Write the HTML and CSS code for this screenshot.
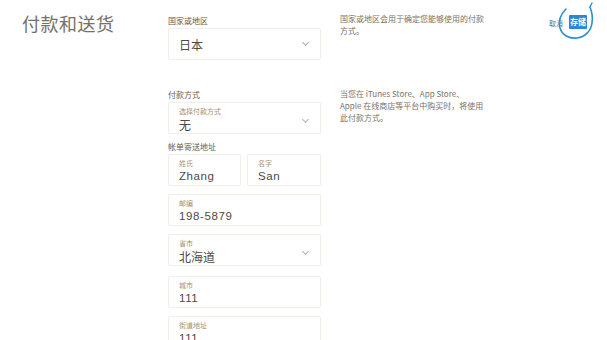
FILE: index.html
```html
<!DOCTYPE html>
<html lang="zh">
<head>
<meta charset="utf-8">
<link rel="stylesheet" href="styles.css">
</head>
<body>
<div class="page">
  <h1 class="title">付款和送货</h1>
  <div class="form">
    <div class="label">国家或地区</div>
    <div class="box select single"><span class="val">日本</span><span class="chev"></span></div>

    <div class="label gap-pay">付款方式</div>
    <div class="box select"><div><div class="sub">选择付款方式</div><div class="val">无</div></div><span class="chev"></span></div>

    <div class="label gap-bill">帐单寄送地址</div>
    <div class="pair">
      <div class="box"><div><div class="sub">姓氏</div><div class="val latin">Zhang</div></div></div>
      <div class="box"><div><div class="sub">名字</div><div class="val latin">San</div></div></div>
    </div>
    <div class="box mt8"><div><div class="sub">邮编</div><div class="val latin">198-5879</div></div></div>
    <div class="box select mt8"><div><div class="sub">省市</div><div class="val">北海道</div></div><span class="chev"></span></div>
    <div class="box mt10"><div><div class="sub">城市</div><div class="val latin">111</div></div></div>
    <div class="box mt8 last"><div><div class="sub">街道地址</div><div class="val latin">111</div></div></div>
  </div>
  <div class="info">
    <p class="note">国家或地区会用于确定您能够使用的付款方式。</p>
    <p class="note second">当您在 iTunes Store、App Store、<br>Apple 在线商店等平台中购买时，将使用此付款方式。</p>
  </div>
  <div class="actions">
    <span class="cancel">取消</span>
    <span class="save">存储</span>
    <svg class="circle" width="44" height="42" viewBox="0 0 44 42"><path d="M10 8 C5 13 2 20 4 27 C6 34 13 38 21 37 C29 36 35 30 36 22 C37 16 36 11 34 6" fill="none" stroke="#2b8fd0" stroke-width="1.6" stroke-linecap="round"/><path d="M34 6 L36 2" stroke="#2b8fd0" stroke-width="1.4" stroke-linecap="round" fill="none"/></svg>
  </div>
</div>
</body>
</html>
```

FILE: styles.css
```css
* { box-sizing: border-box; }
html, body { margin: 0; background: #fff; }
body {
  font-family: "Noto Sans CJK SC", "Liberation Sans", sans-serif;
  color: #555;
  width: 607px;
  height: 340px;
  overflow: hidden;
}
.page {
  display: grid;
  grid-template-columns: 146px 153px 190px 1fr;
  padding-left: 22px;
  height: 340px;
  overflow: hidden;
}
.title {
  margin: 11px 0 0;
  font-size: 18px;
  font-weight: 400;
  line-height: 24px;
  color: #75716a;
  letter-spacing: 0.5px;
}
.form {
  padding-top: 15px;
  display: flex;
  flex-direction: column;
}
.label {
  font-size: 8px;
  line-height: 11px;
  color: #6b5a3e;
  margin-bottom: 2px;
}
.gap-pay { margin-top: 29px; }
.gap-bill { margin-top: 7px; }
.box {
  flex: none;
  border: 1px solid #f1efe8;
  border-radius: 2px;
  height: 32px;
  padding: 4px 10px 0;
  display: flex;
  justify-content: space-between;
  align-items: flex-start;
  box-shadow: 0 0 1px rgba(230, 225, 210, 0.4);
}
.box.single { align-items: center; padding-top: 0; }
.sub {
  font-size: 7px;
  line-height: 9px;
  color: #a89070;
}
.val {
  font-size: 12px;
  line-height: 17px;
  color: #4e4a44;
}
.val.latin {
  font-family: "Liberation Sans", sans-serif;
  font-size: 11.5px;
  letter-spacing: 0.6px;
}
.chev {
  width: 5px;
  height: 5px;
  border-right: 1px solid #b8b2a8;
  border-bottom: 1px solid #b8b2a8;
  transform: rotate(45deg);
  margin-top: 10px;
  margin-right: 2px;
}
.box.single .chev { margin-top: -3px; }
.pair {
  display: grid;
  grid-template-columns: 73px 74px;
  column-gap: 6px;
}
.mt8 { margin-top: 8px; }
.mt10 { margin-top: 10px; }
.box.last { height: 34px; }
.info { padding-left: 19px; padding-top: 13px; }
.note {
  margin: 0;
  font-size: 8px;
  line-height: 12px;
  color: #7a7265;
  width: 148px;
}
.note.second { margin-top: 51px; }
.actions {
  position: relative;
  padding-top: 15px;
  padding-left: 38px;
  display: flex;
  align-items: flex-start;
  gap: 6px;
}
.cancel {
  font-size: 7px;
  color: #4a7aa0;
  line-height: 10px;
  margin-top: 3px;
}
.save {
  background: #2c86d8;
  color: #fff;
  font-size: 8px;
  line-height: 10px;
  padding: 2px 1px;
  border-radius: 1px;
  font-weight: 700;
}
.circle {
  position: absolute;
  left: 45px;
  top: 1px;
}
```
